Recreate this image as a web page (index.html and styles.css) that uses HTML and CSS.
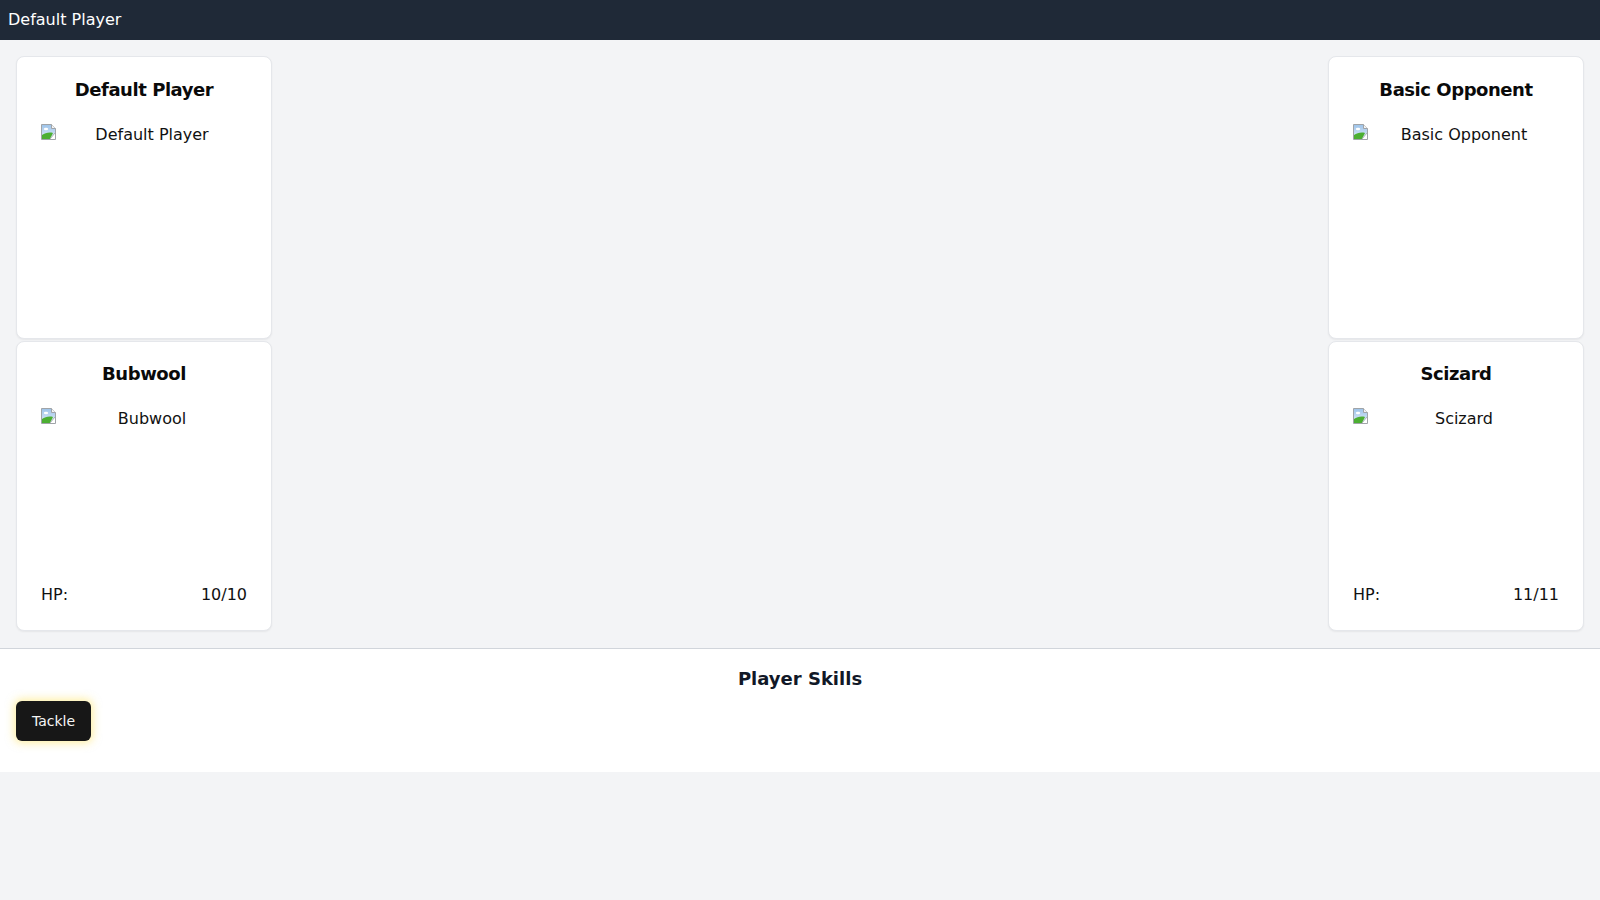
FILE: index.html
```html
<!DOCTYPE html>
<html lang="en">
<head>
<meta charset="utf-8">
<title>Default Player</title>
<link rel="stylesheet" href="styles.css">
</head>
<body>
<header class="topbar">Default Player</header>
<main class="arena">
  <section class="side">
    <div class="card card-trainer">
      <h2 class="card-title">Default Player</h2>
      <div class="pic">
        <svg class="broken" width="16" height="16" viewBox="0 0 16 16" aria-hidden="true">
          <defs><linearGradient id="sky1" x1="0" y1="0" x2="0" y2="1"><stop offset="0" stop-color="#9cc3ea"/><stop offset="1" stop-color="#e4eef9"/></linearGradient></defs>
          <path d="M0.5 0.5h10l4 4v11h-14z" fill="url(#sky1)" stroke="#a0a4a8"/>
          <path d="M10.5 0.5v4h4" fill="#f4f4f4" stroke="#a0a4a8"/>
          <ellipse cx="5" cy="5" rx="2.2" ry="1.2" fill="#ffffff"/>
          <path d="M1 15V11c3-2 7-3 11-2l-3 6z" fill="#4caf32"/>
          <path d="M9 15l5-6v6z" fill="#ffffff"/>
          <path d="M9 15l5-6" stroke="#a0a4a8" stroke-width="0.8" fill="none"/>
        </svg>
        <span class="alt">Default Player</span>
      </div>
    </div>
    <div class="card card-mon">
      <h2 class="card-title">Bubwool</h2>
      <div class="pic">
        <svg class="broken" width="16" height="16" viewBox="0 0 16 16" aria-hidden="true">
          <defs><linearGradient id="sky2" x1="0" y1="0" x2="0" y2="1"><stop offset="0" stop-color="#9cc3ea"/><stop offset="1" stop-color="#e4eef9"/></linearGradient></defs>
          <path d="M0.5 0.5h10l4 4v11h-14z" fill="url(#sky2)" stroke="#a0a4a8"/>
          <path d="M10.5 0.5v4h4" fill="#f4f4f4" stroke="#a0a4a8"/>
          <ellipse cx="5" cy="5" rx="2.2" ry="1.2" fill="#ffffff"/>
          <path d="M1 15V11c3-2 7-3 11-2l-3 6z" fill="#4caf32"/>
          <path d="M9 15l5-6v6z" fill="#ffffff"/>
          <path d="M9 15l5-6" stroke="#a0a4a8" stroke-width="0.8" fill="none"/>
        </svg>
        <span class="alt">Bubwool</span>
      </div>
      <div class="hp"><span>HP:</span><span>10/10</span></div>
    </div>
  </section>
  <section class="side">
    <div class="card card-trainer">
      <h2 class="card-title">Basic Opponent</h2>
      <div class="pic">
        <svg class="broken" width="16" height="16" viewBox="0 0 16 16" aria-hidden="true">
          <defs><linearGradient id="sky3" x1="0" y1="0" x2="0" y2="1"><stop offset="0" stop-color="#9cc3ea"/><stop offset="1" stop-color="#e4eef9"/></linearGradient></defs>
          <path d="M0.5 0.5h10l4 4v11h-14z" fill="url(#sky3)" stroke="#a0a4a8"/>
          <path d="M10.5 0.5v4h4" fill="#f4f4f4" stroke="#a0a4a8"/>
          <ellipse cx="5" cy="5" rx="2.2" ry="1.2" fill="#ffffff"/>
          <path d="M1 15V11c3-2 7-3 11-2l-3 6z" fill="#4caf32"/>
          <path d="M9 15l5-6v6z" fill="#ffffff"/>
          <path d="M9 15l5-6" stroke="#a0a4a8" stroke-width="0.8" fill="none"/>
        </svg>
        <span class="alt">Basic Opponent</span>
      </div>
    </div>
    <div class="card card-mon">
      <h2 class="card-title">Scizard</h2>
      <div class="pic">
        <svg class="broken" width="16" height="16" viewBox="0 0 16 16" aria-hidden="true">
          <defs><linearGradient id="sky4" x1="0" y1="0" x2="0" y2="1"><stop offset="0" stop-color="#9cc3ea"/><stop offset="1" stop-color="#e4eef9"/></linearGradient></defs>
          <path d="M0.5 0.5h10l4 4v11h-14z" fill="url(#sky4)" stroke="#a0a4a8"/>
          <path d="M10.5 0.5v4h4" fill="#f4f4f4" stroke="#a0a4a8"/>
          <ellipse cx="5" cy="5" rx="2.2" ry="1.2" fill="#ffffff"/>
          <path d="M1 15V11c3-2 7-3 11-2l-3 6z" fill="#4caf32"/>
          <path d="M9 15l5-6v6z" fill="#ffffff"/>
          <path d="M9 15l5-6" stroke="#a0a4a8" stroke-width="0.8" fill="none"/>
        </svg>
        <span class="alt">Scizard</span>
      </div>
      <div class="hp"><span>HP:</span><span>11/11</span></div>
    </div>
  </section>
</main>
<section class="skills">
  <h3 class="skills-title">Player Skills</h3>
  <div class="skill-row">
    <button class="skill-btn" type="button">Tackle</button>
  </div>
</section>
</body>
</html>
```

FILE: styles.css
```css
* {
  box-sizing: border-box;
}

html, body {
  margin: 0;
  padding: 0;
}

body {
  font-family: "DejaVu Sans", "Noto Sans", sans-serif;
  font-size: 16px;
  line-height: 24px;
  color: #111111;
  background: #f3f4f6;
  min-height: 900px;
}

.topbar {
  height: 40px;
  padding: 8px;
  background: #1f2937;
  color: #ffffff;
  font-size: 16px;
  line-height: 24px;
}

.arena {
  display: flex;
  justify-content: space-between;
  align-items: flex-start;
  padding: 16px 16px 17px 16px;
}

.side {
  width: 256px;
  display: flex;
  flex-direction: column;
  gap: 2px;
}

.card {
  background: #ffffff;
  border: 1px solid #e5e7eb;
  border-radius: 8px;
  box-shadow: 0 1px 2px rgba(0, 0, 0, 0.06);
  padding: 18px 24px 23px 24px;
}

.card-trainer {
  height: 283px;
  padding-top: 19px;
}

.card-mon {
  height: 290px;
}

.card-title {
  margin: 0 0 19px 0;
  font-size: 18px;
  line-height: 28px;
  font-weight: 700;
  letter-spacing: -0.025em;
  text-align: center;
  color: #0a0a0a;
}

.pic {
  height: 160px;
  display: flex;
  align-items: flex-start;
}

.broken {
  flex: none;
  display: block;
  margin-top: 1px;
}

.alt {
  flex: 1;
  text-align: center;
  color: #111111;
}

.hp {
  margin-top: 16px;
  display: flex;
  justify-content: space-between;
  color: #111111;
}

.skills {
  background: #ffffff;
  border-top: 1px solid #d1d5db;
  padding: 16px 16px 31px 16px;
}

.skills-title {
  margin: 0 0 8px 0;
  font-size: 18px;
  line-height: 28px;
  font-weight: 700;
  text-align: center;
  color: #111827;
}

.skill-row {
  display: flex;
  gap: 8px;
}

.skill-btn {
  font-family: "DejaVu Sans", "Noto Sans", sans-serif;
  font-size: 14px;
  line-height: 20px;
  height: 40px;
  padding: 10px 16px;
  border: none;
  border-radius: 6px;
  background: #171717;
  color: #f5f5f5;
  box-shadow: 0 0 8px 2px rgba(253, 224, 71, 0.5);
  cursor: pointer;
}
```
